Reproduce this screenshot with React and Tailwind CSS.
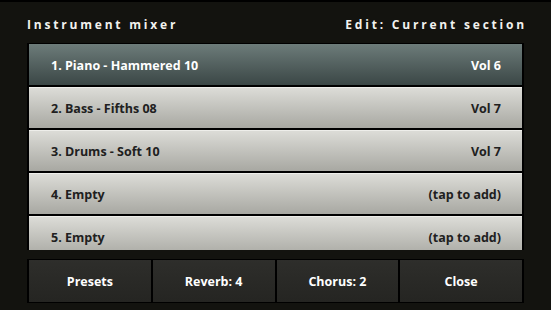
const rows = [
  { name: "1. Piano - Hammered 10", value: "Vol 6", selected: true },
  { name: "2. Bass - Fifths 08", value: "Vol 7" },
  { name: "3. Drums - Soft 10", value: "Vol 7" },
  { name: "4. Empty", value: "(tap to add)" },
  { name: "5. Empty", value: "(tap to add)" },
];

const buttons = ["Presets", "Reverb: 4", "Chorus: 2", "Close"];

export default function App() {
  return (
    <div
      className="w-[551px] h-[310px] bg-[#13130f] border-t-2 border-black overflow-hidden"
      style={{ fontFamily: '"Open Sans", "Noto Sans", sans-serif' }}
    >
      {/* Header */}
      <div className="h-[41px] px-[27px] pt-[5px] flex items-center justify-between text-[12px] font-bold tracking-[2.8px] text-[#f2f2ee]">
        <span>Instrument mixer</span>
        <span className="-mr-[3px]">Edit: Current section</span>
      </div>

      {/* Track list */}
      <div className="mx-[27px] h-[207px] bg-black pt-[1px] pb-[1px] px-[2px] overflow-hidden">
        <div className="flex flex-col gap-[2px]">
          {rows.map((r) => (
            <div
              key={r.name}
              className={
                r.selected
                  ? "h-[41px] shrink-0 flex items-center justify-between pt-[4px] pl-[22px] pr-[21px] bg-gradient-to-b from-[#6d7c7a] to-[#3b4746] text-white text-[12.5px] font-bold"
                  : "h-[41px] shrink-0 flex items-center justify-between pt-[3px] pl-[22px] pr-[21px] bg-gradient-to-b from-[#dcdcd7] to-[#a8a8a2] border-t border-[#eeeeea] text-[#202020] text-[12.5px] font-bold"
              }
            >
              <span>{r.name}</span>
              <span>{r.value}</span>
            </div>
          ))}
        </div>
      </div>

      {/* Bottom buttons */}
      <div className="mx-[27px] mt-[9px] h-[44px] bg-black py-[1px] px-[2px] grid grid-cols-4 gap-[2px]">
        {buttons.map((b) => (
          <div
            key={b}
            className="flex items-center justify-center pt-[3px] bg-gradient-to-b from-[#2e2e2b] to-[#252522] text-white text-[12.5px] font-bold"
          >
            {b}
          </div>
        ))}
      </div>
    </div>
  );
}
